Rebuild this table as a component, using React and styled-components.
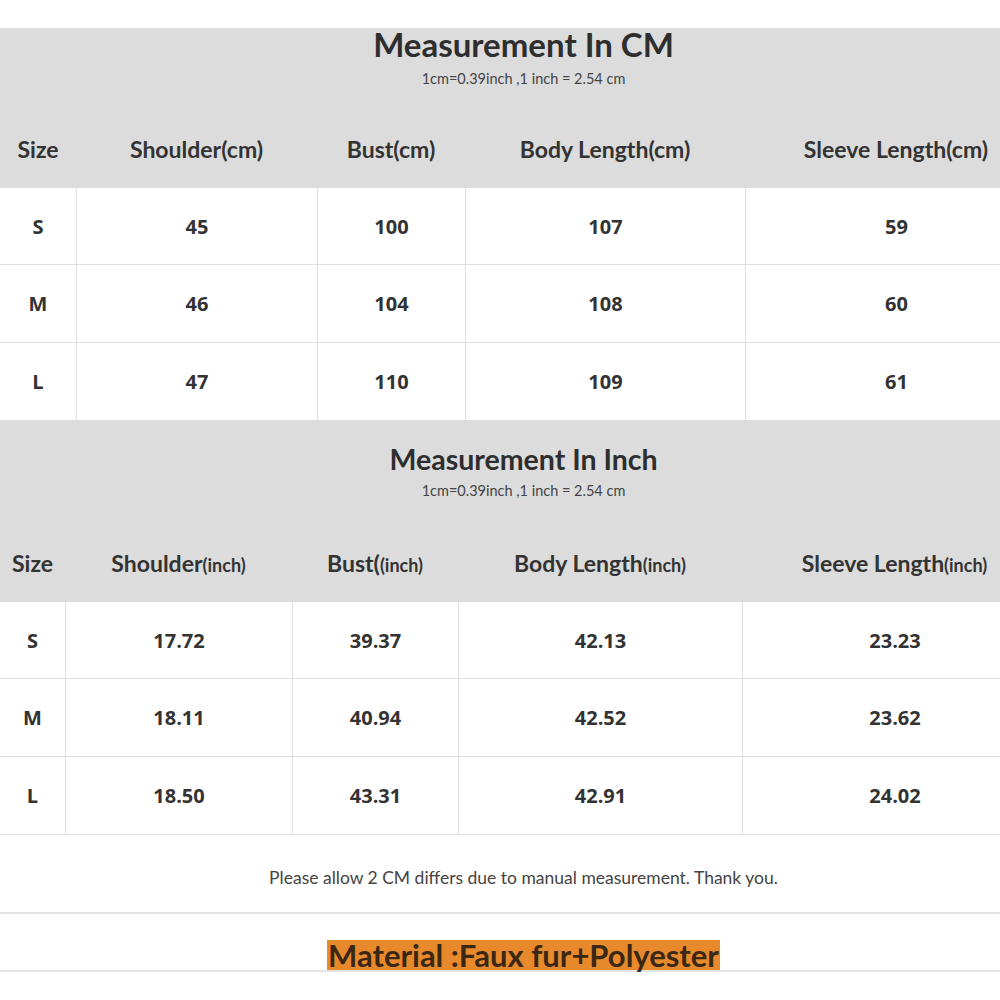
import React from "react";
import styled, { createGlobalStyle } from "styled-components";

const GlobalStyle = createGlobalStyle`
  html, body {
    margin: 0;
    padding: 0;
    background: #fff;
    overflow: hidden;
  }
  body {
    font-family: "Lato", "Open Sans", sans-serif;
    color: #333;
  }
`;

const Page = styled.div`
  width: 1000px;
  overflow: hidden;
  padding-top: 28px;
`;

const Sheet = styled.div`
  width: 1047px;
`;

const HeadBlock = styled.div`
  background: #dcdcdc;
`;

const Caption = styled.div`
  height: ${(p) => p.height}px;
  padding-top: ${(p) => p.top}px;
  box-sizing: border-box;
  display: flex;
  flex-direction: column;
  align-items: center;
`;

const Title = styled.div`
  font-family: "Lato", sans-serif;
  font-weight: 700;
  font-size: ${(p) => p.size}px;
  line-height: 32px;
  color: #2e2e2e;
`;

const Subtitle = styled.div`
  margin-top: ${(p) => p.gap}px;
  font-family: "Lato", sans-serif;
  font-size: 14.5px;
  line-height: 18px;
  color: #444;
`;

const Row = styled.div`
  display: grid;
  grid-template-columns: ${(p) => p.cols};
  height: ${(p) => p.height}px;
  border-bottom: ${(p) => (p.line ? "1px solid #e0e0e0" : "none")};
  box-sizing: border-box;
`;

const HeadCell = styled.div`
  display: flex;
  align-items: center;
  justify-content: center;
  font-family: "Lato", sans-serif;
  font-weight: 700;
  font-size: 23px;
  color: #333;
  white-space: nowrap;

  small {
    font-size: 18px;
    font-weight: 700;
  }
`;

const Cell = styled.div`
  display: flex;
  align-items: center;
  justify-content: center;
  font-family: "Open Sans", sans-serif;
  font-weight: 700;
  font-size: 20px;
  color: #333;
  border-left: ${(p) => (p.first ? "none" : "1px solid #e0e0e0")};
`;

const Note = styled.div`
  height: 79px;
  display: flex;
  align-items: center;
  justify-content: center;
  padding-top: 7px;
  box-sizing: border-box;
  font-family: "Lato", sans-serif;
  font-size: 17.5px;
  color: #444;
  border-bottom: 2px solid #e4e4e4;
`;

const MaterialRow = styled.div`
  height: 58px;
  display: flex;
  align-items: flex-end;
  justify-content: center;
  box-sizing: border-box;
  border-bottom: 2px solid #e4e4e4;
`;

const Material = styled.span`
  background: #e8892b;
  font-family: "Lato", sans-serif;
  font-weight: 700;
  font-size: 31px;
  line-height: 30px;
  padding: 0 1px;
  color: #3a2815;
`;

const cmTable = {
  cols: "76px 241px 148px 280px 302px",
  title: "Measurement In CM",
  caption: { height: 82, top: 0, gap: 10, size: 33 },
  headers: [["Size"], ["Shoulder(cm)"], ["Bust(cm)"], ["Body Length(cm)"], ["Sleeve Length(cm)"]],
  rows: [
    ["S", "45", "100", "107", "59"],
    ["M", "46", "104", "108", "60"],
    ["L", "47", "110", "109", "61"],
  ],
  heights: [77, 78, 77],
};

const inchTable = {
  cols: "65px 227px 166px 284px 305px",
  title: "Measurement In Inch",
  caption: { height: 104, top: 23, gap: 7, size: 28.5 },
  headers: [["Size"], ["Shoulder", "(inch)"], ["Bust(", "(inch)"], ["Body Length", "(inch)"], ["Sleeve Length", "(inch)"]],
  rows: [
    ["S", "17.72", "39.37", "42.13", "23.23"],
    ["M", "18.11", "40.94", "42.52", "23.62"],
    ["L", "18.50", "43.31", "42.91", "24.02"],
  ],
  heights: [77, 78, 77],
};

function SizeTable({ data }) {
  return (
    <Sheet>
      <HeadBlock>
        <Caption height={data.caption.height} top={data.caption.top}>
          <Title size={data.caption.size}>{data.title}</Title>
          <Subtitle gap={data.caption.gap}>1cm=0.39inch ,1 inch = 2.54 cm</Subtitle>
        </Caption>
        <Row cols={data.cols} height={78}>
          {data.headers.map(([main, unit], i) => (
            <HeadCell key={i}>
              <span>
                {main}
                {unit && <small>{unit}</small>}
              </span>
            </HeadCell>
          ))}
        </Row>
      </HeadBlock>
      {data.rows.map((r, i) => (
        <Row key={r[0]} cols={data.cols} height={data.heights[i]} line={i < 2}>
          {r.map((v, j) => (
            <Cell key={j} first={j === 0}>
              {v}
            </Cell>
          ))}
        </Row>
      ))}
    </Sheet>
  );
}

export default function App() {
  return (
    <>
      <GlobalStyle />
      <Page>
        <SizeTable data={cmTable} />
        <SizeTable data={inchTable} />
        <Sheet>
          <Row cols="1fr" height={1} line />
          <Note>Please allow 2 CM differs due to manual measurement. Thank you.</Note>
          <MaterialRow>
            <Material>Material :Faux fur+Polyester</Material>
          </MaterialRow>
        </Sheet>
      </Page>
    </>
  );
}
